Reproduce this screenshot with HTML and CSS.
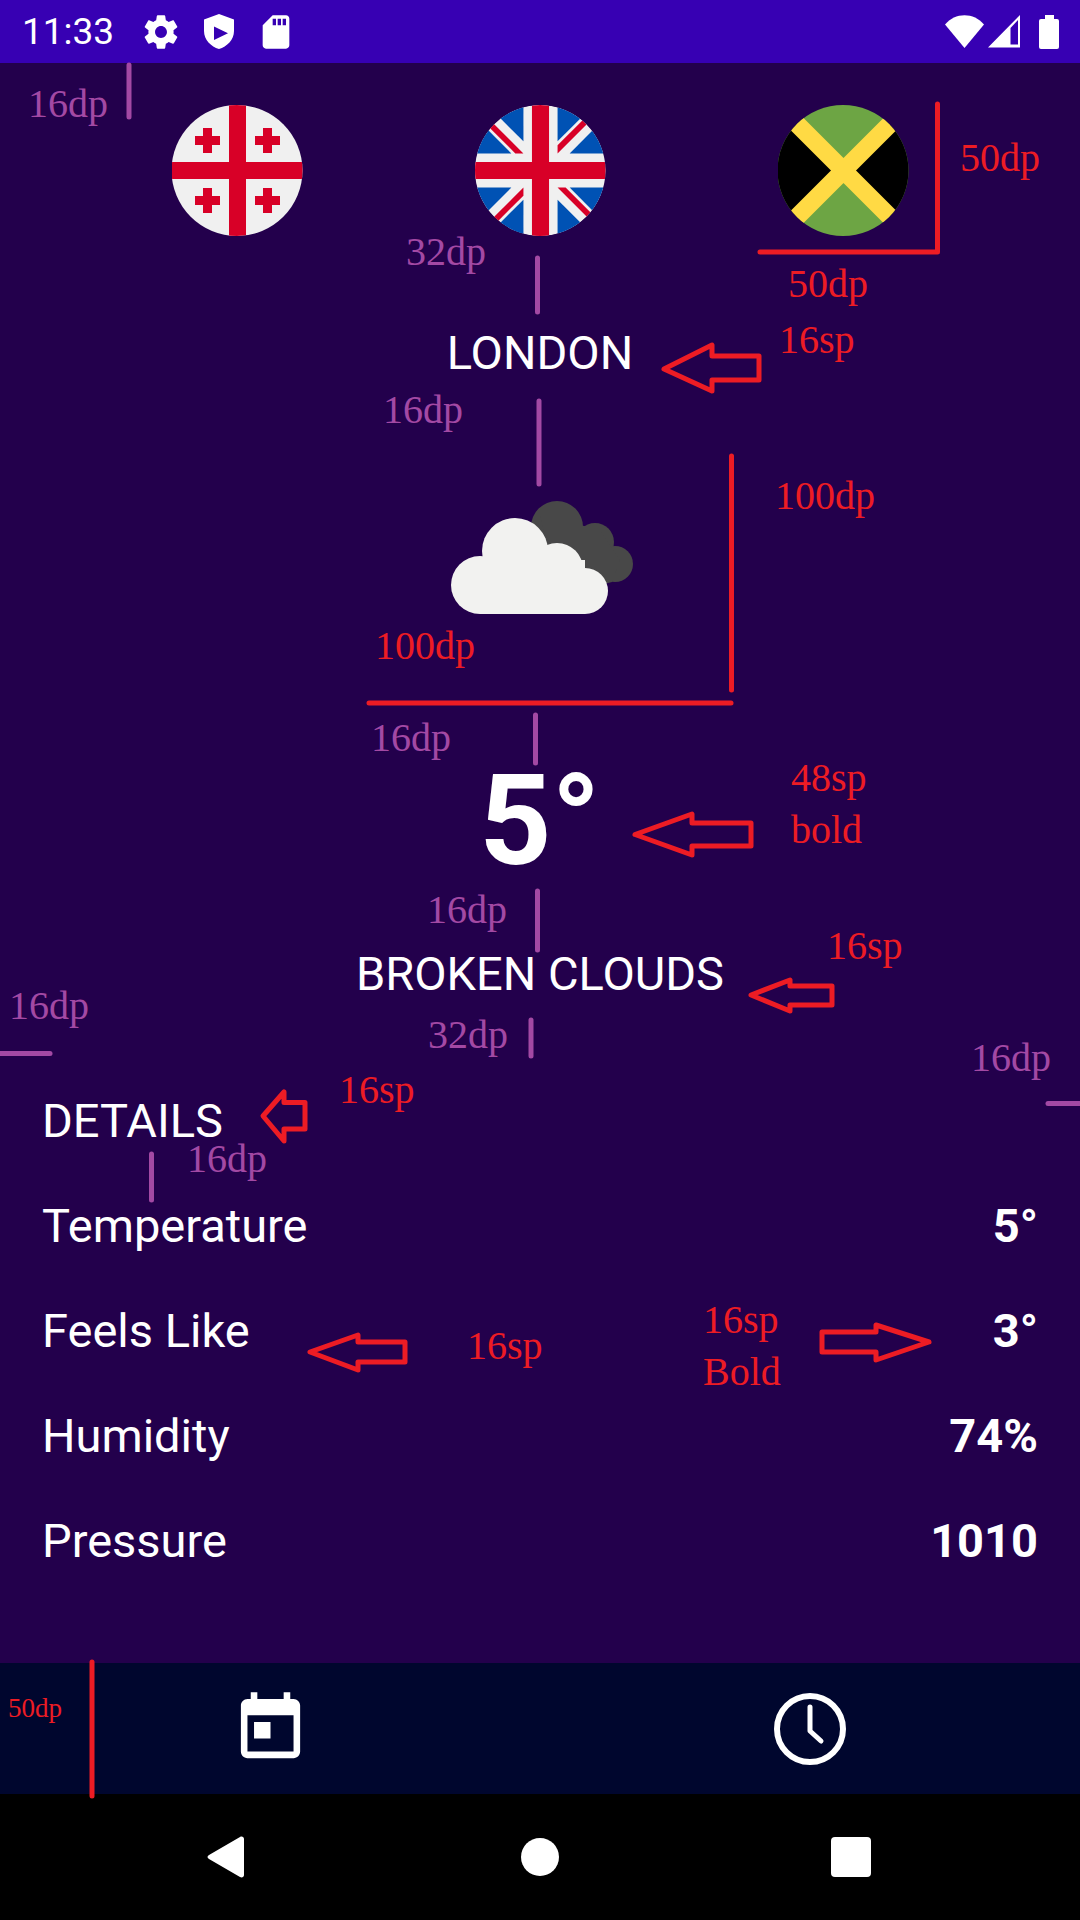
FILE: index.html
```html
<!DOCTYPE html>
<html lang="en">
  <head>
    <meta charset="UTF-8" />
    <meta name="viewport" content="width=device-width, initial-scale=1.0" />
    <title>Weather Spec</title>
    <link rel="stylesheet" href="styles.css">
  </head>
  <body>
    <div id="statusBar">
      <span id="clock">11:33</span>
      <svg class="gearIcon" viewBox="0 0 24 24">
        <path d="M19.14 12.94c.04-.3.06-.61.06-.94 0-.32-.02-.64-.07-.94l2.03-1.58c.18-.14.23-.41.12-.61l-1.92-3.32c-.12-.22-.37-.29-.59-.22l-2.39.96c-.5-.38-1.03-.7-1.62-.94l-.36-2.54c-.04-.24-.24-.41-.48-.41h-3.84c-.24 0-.43.17-.47.41l-.36 2.54c-.59.24-1.13.57-1.62.94l-2.39-.96c-.22-.08-.47 0-.59.22L2.74 8.87c-.12.21-.08.47.12.61l2.03 1.58c-.05.3-.09.63-.09.94s.02.64.07.94l-2.03 1.58c-.18.14-.23.41-.12.61l1.92 3.32c.12.22.37.29.59.22l2.39-.96c.5.38 1.03.7 1.62.94l.36 2.54c.05.24.24.41.48.41h3.84c.24 0 .44-.17.47-.41l.36-2.54c.59-.24 1.13-.56 1.62-.94l2.39.96c.22.08.47 0 .59-.22l1.92-3.32c.12-.22.07-.47-.12-.61l-2.01-1.58zM12 15.4c-1.87 0-3.4-1.53-3.4-3.4s1.53-3.4 3.4-3.4 3.4 1.53 3.4 3.4-1.53 3.4-3.4 3.4z" />
      </svg>
      <svg class="shieldIcon" viewBox="0 0 30 35">
        <path fill-rule="evenodd" d="M15 0 L30 5.5 V17 C30 26 23 32.5 15 35 C7 32.5 0 26 0 17 V5.5 Z M10 12.5 V26 L24 19.3 Z" />
      </svg>
      <svg class="sdIcon" viewBox="0 0 24 24">
        <path d="M18 2h-8L4.02 8 4 20c0 1.1.9 2 2 2h12c1.1 0 2-.9 2-2V4c0-1.1-.9-2-2-2zm-6 6h-2V4h2v4zm3 0h-2V4h2v4zm3 0h-2V4h2v4z" />
      </svg>
      <div class="spacer"></div>
      <svg class="wifiIcon" viewBox="0 0 39 33">
        <path d="M0 9.5 C10 -3 29 -3 39 9.5 L19.5 33 Z" />
      </svg>
      <svg class="signalIcon" viewBox="0 0 32 33">
        <path fill-rule="evenodd" d="M0 32.5 L32 0 V32.5 Z M22.5 13 V29.500 H30 V5 Z" />
      </svg>
      <div class="battery"><div class="batteryCap"></div><div class="batteryBody"></div></div>
    </div>

    <div id="main">
      <div id="flags">
        <svg class="flag" viewBox="0 0 131 131">
          <rect width="131" height="131" fill="#f0f0f0" />
          <g fill="#d80027">
            <rect x="57" y="0" width="17" height="131" />
            <rect x="0" y="57" width="131" height="17" />
            <path d="M31 23h9v8h8v9h-8v8h-9v-8h-8v-9h8z" />
            <path d="M91 23h9v8h8v9h-8v8h-9v-8h-8v-9h8z" />
            <path d="M31 83h9v8h8v9h-8v8h-9v-8h-8v-9h8z" />
            <path d="M91 83h9v8h8v9h-8v8h-9v-8h-8v-9h8z" />
          </g>
        </svg>
        <svg class="flag" viewBox="0 0 512 512">
          <circle cx="256" cy="256" r="256" fill="#f0f0f0" />
          <g fill="#0052b4">
            <path d="M52.92 100.142c-20.109 26.163-35.272 56.318-44.101 89.077h133.178L52.92 100.142z" />
            <path d="M503.181 189.219c-8.829-32.758-23.993-62.913-44.101-89.076l-89.075 89.076H503.181z" />
            <path d="M8.819 322.784c8.83 32.758 23.993 62.913 44.101 89.075l89.074-89.075H8.819z" />
            <path d="M411.858 52.921c-26.163-20.109-56.317-35.272-89.076-44.102v133.177L411.858 52.921z" />
            <path d="M100.142 459.079c26.163 20.109 56.318 35.272 89.076 44.102V370.005L100.142 459.079z" />
            <path d="M189.217 8.819c-32.758 8.83-62.913 23.993-89.075 44.101l89.075 89.075V8.819z" />
            <path d="M322.783 503.181c32.758-8.83 62.913-23.993 89.075-44.101l-89.075-89.075V503.181z" />
            <path d="M370.005 322.784l89.075 89.076c20.108-26.162 35.272-56.318 44.101-89.076H370.005z" />
          </g>
          <g fill="#d80027">
            <path d="M509.833 222.609H289.392V2.167C278.461.744 267.317 0 256 0c-11.319 0-22.461.744-33.391 2.167v220.442H2.167C.744 233.539 0 244.683 0 256c0 11.319.744 22.461 2.167 33.391h220.442v220.442C233.539 511.256 244.681 512 256 512c11.317 0 22.461-.743 33.391-2.167V289.391h220.442C511.256 278.461 512 267.319 512 256c0-11.317-.744-22.461-2.167-33.391z" />
            <path d="M322.783 322.784L437.019 437.02c5.254-5.252 10.266-10.743 15.048-16.435l-97.802-97.802h-31.482z" />
            <path d="M189.217 322.784L74.98 437.019c5.252 5.254 10.743 10.266 16.435 15.048l97.802-97.804v-31.479z" />
            <path d="M189.217 189.219L74.981 74.98c-5.254 5.252-10.266 10.743-15.048 16.435l97.803 97.803h31.481z" />
            <path d="M322.783 189.219L437.02 74.981c-5.252-5.254-10.743-10.266-16.435-15.047l-97.802 97.803v31.482z" />
          </g>
        </svg>
        <svg class="flag" viewBox="0 0 131 131">
          <rect width="131" height="131" fill="#6da544" />
          <path d="M0 0 L65.5 65.5 L0 131 Z M131 0 L65.5 65.5 L131 131 Z" fill="#000" />
          <path d="M0 0 L131 131 M131 0 L0 131" stroke="#ffda44" stroke-width="17.7" />
        </svg>
      </div>

      <div id="city">LONDON</div>

      <svg id="weatherIcon" viewBox="409 427 262 262">
        <g fill="#484848">
          <circle cx="557" cy="527" r="26" />
          <circle cx="595" cy="542" r="19" />
          <circle cx="615" cy="564" r="18" />
          <path d="M540 515 L600 530 L620 560 L612 582 L580 590 L550 560 Z" />
        </g>
        <g fill="#f2f2f0">
          <circle cx="480" cy="585" r="29" />
          <circle cx="515" cy="551" r="33" />
          <circle cx="557" cy="569" r="26" />
          <circle cx="585" cy="591" r="23" />
          <path d="M480 560 H585 V614 H480 Z" />
        </g>
      </svg>

      <div id="temperature">5°</div>
      <div id="condition">BROKEN CLOUDS</div>

      <div id="details">
        <div id="detailsTitle">DETAILS</div>
        <div class="row"><span>Temperature</span><b>5°</b></div>
        <div class="row"><span>Feels Like</span><b>3°</b></div>
        <div class="row"><span>Humidity</span><b>74%</b></div>
        <div class="row"><span>Pressure</span><b>1010</b></div>
      </div>
    </div>

    <div id="bottomNav">
      <div class="navItem">
        <svg class="todayIcon" viewBox="0 0 24 24">
          <path d="M19 3h-1V1h-2v2H8V1H6v2H5c-1.11 0-1.99.9-1.99 2L3 19c0 1.1.89 2 2 2h14c1.1 0 2-.9 2-2V5c0-1.1-.9-2-2-2zm0 16H5V8h14v11zM7 10h5v5H7z" />
        </svg>
      </div>
      <div class="navItem">
        <svg class="clockIcon" viewBox="0 0 72 72">
          <circle cx="36" cy="36" r="33" />
          <path d="M36 14 V38 L47 48" />
        </svg>
      </div>
    </div>

    <div id="systemNav">
      <svg class="backBtn" viewBox="0 0 37 42">
        <path d="M2 19 L33 1 C35 0 37 1 37 3 V39 C37 41 35 42 33 41 L2 23 C0 22 0 20 2 19 Z" />
      </svg>
      <div class="homeBtn"></div>
      <div class="recentBtn"></div>
    </div>

    <!-- spec marks drawn on top of the screenshot -->
    <svg id="marks" viewBox="0 0 1080 1920">
      <g class="purpleLine">
        <path d="M129 65 V117" />
        <path d="M537.500 258 V312" />
        <path d="M539 401 V484" />
        <path d="M535.500 715 V763" />
        <path d="M537.500 891 V950" />
        <path d="M531 1020 V1056" />
        <path d="M0 1053.500 H50" />
        <path d="M1048 1103.500 H1080" />
        <path d="M151.500 1154 V1200" />
      </g>
      <g class="redLine">
        <path d="M937.500 104 V252 H760" />
        <path d="M731.500 456 V690" />
        <path d="M369 703 H731" />
        <path d="M92 1662 V1796" />
      </g>
      <g class="redArrow">
        <path d="M664 369 L712 345 V356 H759 V380 H712 V391 Z" />
        <path d="M635 834.500 L692 814 V823 H751 V846 H692 V855 Z" />
        <path d="M751 995 L790 980 V986 H832 V1005 H790 V1011 Z" />
        <path d="M263 1116 L284 1092 V1102.500 H305 V1129 H284 V1141 Z" />
        <path d="M310 1352 L358 1335 V1342 H405 V1362 H358 V1370 Z" />
        <path d="M929 1342 L876 1325 V1332 H822 V1352 H876 V1360 Z" />
      </g>
      <g class="purpleNote">
        <text x="28" y="117">16dp</text>
        <text x="406" y="265">32dp</text>
        <text x="383" y="423">16dp</text>
        <text x="371" y="751">16dp</text>
        <text x="427" y="923">16dp</text>
        <text x="9" y="1019">16dp</text>
        <text x="428" y="1048">32dp</text>
        <text x="971" y="1071">16dp</text>
        <text x="187" y="1172">16dp</text>
      </g>
      <g class="redNote">
        <text x="960" y="171">50dp</text>
        <text x="788" y="297">50dp</text>
        <text x="779" y="353">16sp</text>
        <text x="775" y="509">100dp</text>
        <text x="375" y="659">100dp</text>
        <text x="791" y="791">48sp</text>
        <text x="791" y="843">bold</text>
        <text x="827" y="959">16sp</text>
        <text x="339" y="1103">16sp</text>
        <text x="467" y="1359">16sp</text>
        <text x="703" y="1333">16sp</text>
        <text x="703" y="1385">Bold</text>
        <text class="tinyNote" x="8" y="1717">50dp</text>
      </g>
    </svg>
  </body>
</html>
```

FILE: styles.css
```css
* {
  --status-color: #3700b3;
  --page-color: #23004c;
  --nav-color: #00062e;
  --mark-red: #ed1c24;
  --mark-purple: #a349a4;
}
html,
body {
  margin: 0;
  padding: 0;
}
body {
  width: 1080px;
  height: 1920px;
  display: flex;
  flex-direction: column;
  overflow: hidden;
  position: relative;
  font-family: Roboto, sans-serif;
  color: white;
  background-color: var(--page-color);
}
svg {
  display: block;
  flex: none;
}

/* status bar */
#statusBar {
  height: 63px;
  display: flex;
  align-items: center;
  padding: 0 21px 0 22px;
  background-color: var(--status-color);
  fill: white;
}
#clock {
  font-size: 37px;
  line-height: 63px;
  width: 115px;
}
.gearIcon {
  width: 42px;
  height: 42px;
  margin-left: 3px;
}
.shieldIcon {
  width: 30px;
  height: 35px;
  margin-left: 22px;
}
.sdIcon {
  width: 40px;
  height: 40px;
  margin-left: 22px;
}
.spacer {
  flex: 1;
}
.wifiIcon {
  width: 39px;
  height: 33px;
}
.signalIcon {
  width: 32px;
  height: 33px;
  margin-left: 4px;
}
.battery {
  width: 20px;
  height: 34px;
  margin-left: 19px;
  display: flex;
  flex-direction: column;
  align-items: center;
}
.batteryCap {
  width: 9px;
  height: 4px;
  background-color: white;
}
.batteryBody {
  width: 20px;
  height: 30px;
  border-radius: 2px;
  background-color: white;
}

/* main column */
#main {
  flex: 1;
  display: flex;
  flex-direction: column;
  align-items: center;
  font-size: 47px;
  line-height: 55px;
}
#flags {
  display: grid;
  grid-template-columns: repeat(3, 303px);
  justify-items: center;
  margin-top: 42px;
}
.flag {
  width: 131px;
  height: 131px;
  clip-path: circle(50%);
}
#city {
  margin-top: 89px;
}
#weatherIcon {
  width: 262px;
  height: 262px;
  margin-top: 47px;
}
#temperature {
  margin-top: 58px;
  font-size: 126px;
  line-height: 148px;
  font-weight: bold;
}
#condition {
  margin-top: 51px;
}
#details {
  width: 100%;
  box-sizing: border-box;
  padding: 0 42px;
  margin-top: 92px;
}
.row {
  display: flex;
  justify-content: space-between;
  margin-top: 50px;
}
.row b {
  font-weight: bold;
}

/* bottom navigation */
#bottomNav {
  height: 131px;
  display: flex;
  background-color: var(--nav-color);
}
.navItem {
  flex: 1;
  display: flex;
  align-items: center;
  justify-content: center;
}
.todayIcon {
  width: 79px;
  height: 79px;
  fill: white;
}
.clockIcon {
  width: 72px;
  height: 72px;
  fill: none;
  stroke: white;
}
.clockIcon circle {
  stroke-width: 6;
}
.clockIcon path {
  stroke-width: 5;
  stroke-linecap: round;
  stroke-linejoin: round;
}

/* system navigation */
#systemNav {
  height: 126px;
  display: flex;
  align-items: center;
  padding-left: 207px;
  background-color: black;
}
.backBtn {
  width: 37px;
  height: 42px;
  fill: white;
}
.homeBtn {
  width: 38px;
  height: 38px;
  margin-left: 277px;
  border-radius: 50%;
  background-color: white;
}
.recentBtn {
  width: 40px;
  height: 40px;
  margin-left: 272px;
  border-radius: 4px;
  background-color: white;
}

/* spec marks */
#marks {
  position: absolute;
  top: 0;
  left: 0;
  width: 1080px;
  height: 1920px;
  font-family: "Liberation Serif", serif;
  font-size: 40px;
}
.purpleLine path {
  fill: none;
  stroke: var(--mark-purple);
  stroke-width: 5;
  stroke-linecap: round;
}
.redLine path {
  fill: none;
  stroke: var(--mark-red);
  stroke-width: 5;
  stroke-linecap: round;
  stroke-linejoin: round;
}
.redArrow path {
  fill: none;
  stroke: var(--mark-red);
  stroke-width: 5;
  stroke-linejoin: round;
}
.purpleNote {
  fill: var(--mark-purple);
}
.redNote {
  fill: var(--mark-red);
}
.tinyNote {
  font-size: 27px;
}
```
